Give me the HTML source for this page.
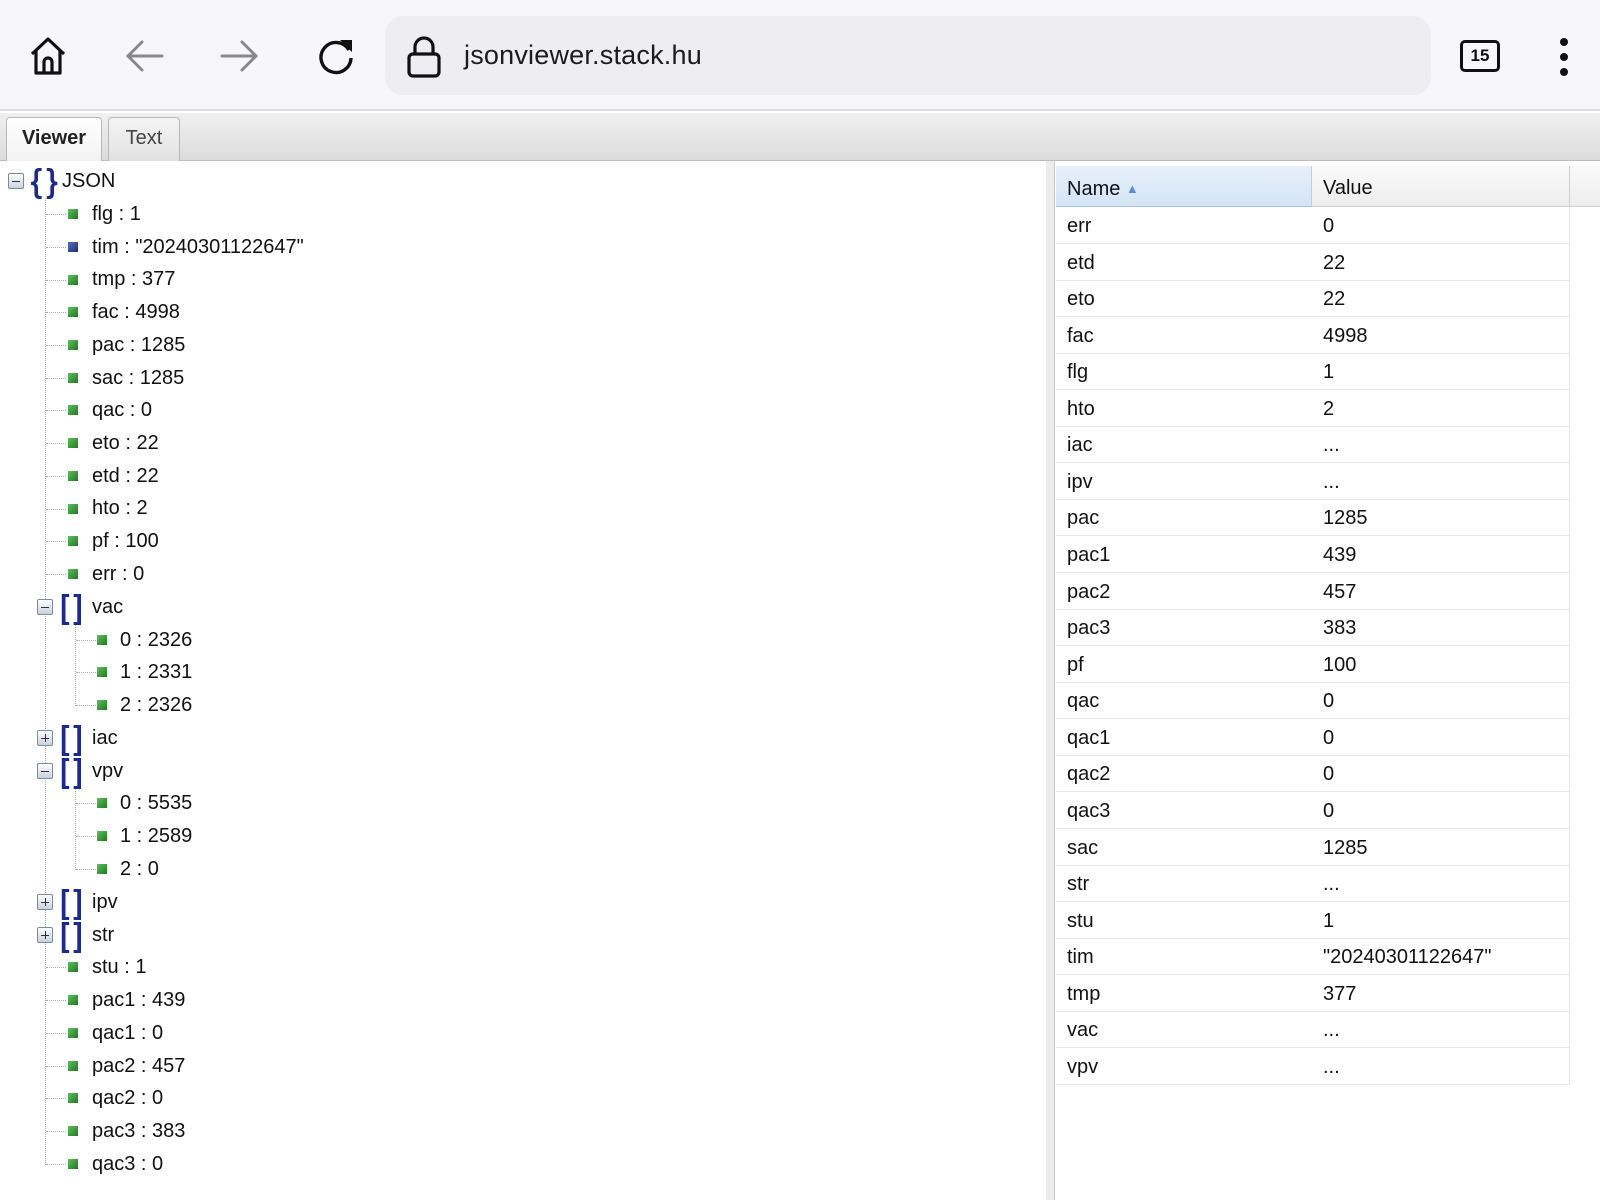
<!DOCTYPE html>
<html><head><meta charset="utf-8">
<style>
*{margin:0;padding:0;box-sizing:border-box}
body{width:1600px;height:1200px;overflow:hidden;background:#fff;font-family:"Liberation Sans",Arial,sans-serif;color:#111;position:relative}
.abs{position:absolute}
#top{left:0;top:0;width:1600px;height:111px;background:#f7f7fa;border-bottom:2px solid #dcdcdc}
#url{left:385px;top:16px;width:1046px;height:79px;border-radius:18px;background:#ededf2}
#urltxt{left:464px;top:40px;font-size:27px;color:#1b1b1f;letter-spacing:0.2px}
#tabs{left:0;top:113px;width:1600px;height:48px;background:linear-gradient(#f0f0f0,#dcdcdc);border-bottom:1px solid #bdbdbd}
.tab{top:4px;height:44px;border:1px solid #b8b8b8;border-bottom:none;border-radius:4px 4px 0 0;font-size:20px;text-align:center;line-height:40px}
#t1{left:6px;width:96px;background:linear-gradient(#fff,#f2f2f2);font-weight:bold;color:#222}
#t2{left:108px;width:72px;background:linear-gradient(#f4f4f4,#e2e2e2);color:#444}
.r{position:absolute;height:32px;line-height:32px;font-size:20px;white-space:nowrap}
.sq{position:absolute;width:10px;height:10px;background:linear-gradient(135deg,#5fbf5f,#1e7a1e)}
.sqb{background:linear-gradient(135deg,#5a6fc0,#1a2a7a)}
.tg{position:absolute;width:16px;height:16px;border:1px solid #7a8aa0;border-radius:2px;background:linear-gradient(#fff,#c8d2de)}
.tg:before{content:"";position:absolute;left:3px;top:6.5px;width:8px;height:1.5px;background:#333}
.tg.p:after{content:"";position:absolute;left:6.5px;top:3px;width:1.5px;height:8px;background:#333}
.br{position:absolute;font-size:32px;color:#1d2a8a;line-height:32px;letter-spacing:5px;-webkit-text-stroke:1px #1d2a8a}
.vl{position:absolute;border-left:1px dotted #aaa;width:0}
.hl{position:absolute;border-top:1px dotted #aaa;height:0}
#div{left:1046px;top:161px;width:9px;height:1039px;background:#ececec;border-right:1px solid #c8c8c8}
.hd{position:absolute;top:168px;height:41px;line-height:41px;font-size:20px}
.tr{position:absolute;left:1056px;width:513px;height:36.55px;line-height:38px;font-size:20px;border-bottom:1px solid #e8e8e8}
.tr span{position:absolute}
#tree{position:absolute;left:0;top:2px;width:1040px;height:1190px}
</style></head><body>
<div id="top" class="abs"></div>
<svg class="abs" style="left:28px;top:36px" width="40" height="40" viewBox="0 0 40 40" fill="none" stroke="#111" stroke-width="3.2" stroke-linejoin="round"><path d="M4 18 L20 3 L36 18 M8 15 V37 H32 V15 M16 37 V26 a4 4 0 0 1 8 0 V37"/></svg>
<svg class="abs" style="left:124px;top:38px" width="40" height="36" viewBox="0 0 40 36" fill="none" stroke="#888" stroke-width="3" stroke-linecap="round"><path d="M38 18 H4 M18 4 L4 18 L18 32"/></svg>
<svg class="abs" style="left:220px;top:38px" width="40" height="36" viewBox="0 0 40 36" fill="none" stroke="#888" stroke-width="3" stroke-linecap="round"><path d="M2 18 H36 M22 4 L36 18 L22 32"/></svg>
<svg class="abs" style="left:316px;top:36px" width="40" height="40" viewBox="0 0 40 40" fill="none" stroke="#111" stroke-width="3.4"><path d="M33 14 A15 15 0 1 0 35 22"/><path d="M24 4 L36 4 L36 16 Z" fill="#111" stroke="none"/></svg>
<div id="url" class="abs"></div>
<svg class="abs" style="left:407px;top:36px" width="34" height="42" viewBox="0 0 34 42" fill="none" stroke="#111" stroke-width="3.2"><path d="M8 18 V11 a9 9 0 0 1 18 0 V18"/><rect x="2" y="18" width="30" height="22" rx="4"/></svg>
<div id="urltxt" class="abs">jsonviewer.stack.hu</div>
<div class="abs" style="left:1460px;top:40px;width:40px;height:32px;border:3px solid #111;border-radius:5px;font-size:17px;font-weight:bold;text-align:center;line-height:26px">15</div>
<div class="abs" style="left:1560px;top:38px;width:8px;height:8px;border-radius:50%;background:#111"></div>
<div class="abs" style="left:1560px;top:53px;width:8px;height:8px;border-radius:50%;background:#111"></div>
<div class="abs" style="left:1560px;top:68px;width:8px;height:8px;border-radius:50%;background:#111"></div>
<div id="tabs" class="abs"><div class="tab abs" id="t1">Viewer</div><div class="tab abs" id="t2">Text</div></div>

<div id="tree">
<div class="vl" style="left:45px;top:196px;height:967px"></div>
<div class="vl" style="left:75px;top:622px;height:82px"></div>
<div class="vl" style="left:75px;top:786px;height:82px"></div>

<div class="tg" style="left:8px;top:171px"></div>
<div class="br" style="left:31px;top:163px">{}</div>
<div class="r" style="left:62px;top:163px">JSON</div>

<div class="hl" style="left:46px;top:212px;width:20px"></div><div class="sq" style="left:68px;top:207px"></div><div class="r" style="left:92px;top:196px">flg : 1</div>
<div class="hl" style="left:46px;top:245px;width:20px"></div><div class="sq sqb" style="left:68px;top:240px"></div><div class="r" style="left:92px;top:229px">tim : "20240301122647"</div>
<div class="hl" style="left:46px;top:278px;width:20px"></div><div class="sq" style="left:68px;top:273px"></div><div class="r" style="left:92px;top:261px">tmp : 377</div>
<div class="hl" style="left:46px;top:310px;width:20px"></div><div class="sq" style="left:68px;top:305px"></div><div class="r" style="left:92px;top:294px">fac : 4998</div>
<div class="hl" style="left:46px;top:343px;width:20px"></div><div class="sq" style="left:68px;top:338px"></div><div class="r" style="left:92px;top:327px">pac : 1285</div>
<div class="hl" style="left:46px;top:376px;width:20px"></div><div class="sq" style="left:68px;top:371px"></div><div class="r" style="left:92px;top:360px">sac : 1285</div>
<div class="hl" style="left:46px;top:408px;width:20px"></div><div class="sq" style="left:68px;top:403px"></div><div class="r" style="left:92px;top:392px">qac : 0</div>
<div class="hl" style="left:46px;top:441px;width:20px"></div><div class="sq" style="left:68px;top:436px"></div><div class="r" style="left:92px;top:425px">eto : 22</div>
<div class="hl" style="left:46px;top:474px;width:20px"></div><div class="sq" style="left:68px;top:469px"></div><div class="r" style="left:92px;top:458px">etd : 22</div>
<div class="hl" style="left:46px;top:507px;width:20px"></div><div class="sq" style="left:68px;top:502px"></div><div class="r" style="left:92px;top:490px">hto : 2</div>
<div class="hl" style="left:46px;top:539px;width:20px"></div><div class="sq" style="left:68px;top:534px"></div><div class="r" style="left:92px;top:523px">pf : 100</div>
<div class="hl" style="left:46px;top:572px;width:20px"></div><div class="sq" style="left:68px;top:567px"></div><div class="r" style="left:92px;top:556px">err : 0</div>

<div class="tg" style="left:37px;top:597px"></div><div class="br" style="left:60px;top:589px">[]</div><div class="r" style="left:92px;top:589px">vac</div>
<div class="hl" style="left:76px;top:638px;width:20px"></div><div class="sq" style="left:97px;top:633px"></div><div class="r" style="left:120px;top:622px">0 : 2326</div>
<div class="hl" style="left:76px;top:670px;width:20px"></div><div class="sq" style="left:97px;top:665px"></div><div class="r" style="left:120px;top:654px">1 : 2331</div>
<div class="hl" style="left:76px;top:703px;width:20px"></div><div class="sq" style="left:97px;top:698px"></div><div class="r" style="left:120px;top:687px">2 : 2326</div>
<div class="tg p" style="left:37px;top:728px"></div><div class="br" style="left:60px;top:720px">[]</div><div class="r" style="left:92px;top:720px">iac</div>
<div class="tg" style="left:37px;top:761px"></div><div class="br" style="left:60px;top:753px">[]</div><div class="r" style="left:92px;top:753px">vpv</div>
<div class="hl" style="left:76px;top:801px;width:20px"></div><div class="sq" style="left:97px;top:796px"></div><div class="r" style="left:120px;top:785px">0 : 5535</div>
<div class="hl" style="left:76px;top:834px;width:20px"></div><div class="sq" style="left:97px;top:829px"></div><div class="r" style="left:120px;top:818px">1 : 2589</div>
<div class="hl" style="left:76px;top:867px;width:20px"></div><div class="sq" style="left:97px;top:862px"></div><div class="r" style="left:120px;top:851px">2 : 0</div>
<div class="tg p" style="left:37px;top:892px"></div><div class="br" style="left:60px;top:884px">[]</div><div class="r" style="left:92px;top:884px">ipv</div>
<div class="tg p" style="left:37px;top:925px"></div><div class="br" style="left:60px;top:917px">[]</div><div class="r" style="left:92px;top:917px">str</div>
<div class="hl" style="left:46px;top:965px;width:20px"></div><div class="sq" style="left:68px;top:960px"></div><div class="r" style="left:92px;top:949px">stu : 1</div>
<div class="hl" style="left:46px;top:998px;width:20px"></div><div class="sq" style="left:68px;top:993px"></div><div class="r" style="left:92px;top:982px">pac1 : 439</div>
<div class="hl" style="left:46px;top:1031px;width:20px"></div><div class="sq" style="left:68px;top:1026px"></div><div class="r" style="left:92px;top:1015px">qac1 : 0</div>
<div class="hl" style="left:46px;top:1064px;width:20px"></div><div class="sq" style="left:68px;top:1059px"></div><div class="r" style="left:92px;top:1048px">pac2 : 457</div>
<div class="hl" style="left:46px;top:1096px;width:20px"></div><div class="sq" style="left:68px;top:1091px"></div><div class="r" style="left:92px;top:1080px">qac2 : 0</div>
<div class="hl" style="left:46px;top:1129px;width:20px"></div><div class="sq" style="left:68px;top:1124px"></div><div class="r" style="left:92px;top:1113px">pac3 : 383</div>
<div class="hl" style="left:46px;top:1162px;width:20px"></div><div class="sq" style="left:68px;top:1157px"></div><div class="r" style="left:92px;top:1146px">qac3 : 0</div>
</div>

<div id="div" class="abs"></div>
<div class="abs" style="left:1056px;top:166px;width:544px;height:41px;background:linear-gradient(#fafafa,#ededed);border-bottom:1px solid #d0d0d0"></div>
<div class="abs" style="left:1056px;top:166px;width:256px;height:41px;background:linear-gradient(#e6f0fb,#d4e4f6);border-right:1px solid #c0cfe0;border-bottom:1px solid #a8c4e4"></div>
<div class="abs" style="left:1569px;top:166px;width:1px;height:41px;background:#d0d0d0"></div>
<div class="hd" style="left:1067px">Name <span style="font-size:13px;color:#5b8fd0;vertical-align:2px">&#9650;</span></div>
<div class="hd" style="left:1323px">Value</div>
<div class="abs" style="left:1569px;top:207px;width:1px;height:878px;background:#e6e6e6"></div>

<div class="tr" style="top:207px"><span style="left:11px">err</span><span style="left:267px">0</span></div>
<div class="tr" style="top:244px"><span style="left:11px">etd</span><span style="left:267px">22</span></div>
<div class="tr" style="top:280px"><span style="left:11px">eto</span><span style="left:267px">22</span></div>
<div class="tr" style="top:317px"><span style="left:11px">fac</span><span style="left:267px">4998</span></div>
<div class="tr" style="top:353px"><span style="left:11px">flg</span><span style="left:267px">1</span></div>
<div class="tr" style="top:390px"><span style="left:11px">hto</span><span style="left:267px">2</span></div>
<div class="tr" style="top:426px"><span style="left:11px">iac</span><span style="left:267px">...</span></div>
<div class="tr" style="top:463px"><span style="left:11px">ipv</span><span style="left:267px">...</span></div>
<div class="tr" style="top:499px"><span style="left:11px">pac</span><span style="left:267px">1285</span></div>
<div class="tr" style="top:536px"><span style="left:11px">pac1</span><span style="left:267px">439</span></div>
<div class="tr" style="top:573px"><span style="left:11px">pac2</span><span style="left:267px">457</span></div>
<div class="tr" style="top:609px"><span style="left:11px">pac3</span><span style="left:267px">383</span></div>
<div class="tr" style="top:646px"><span style="left:11px">pf</span><span style="left:267px">100</span></div>
<div class="tr" style="top:682px"><span style="left:11px">qac</span><span style="left:267px">0</span></div>
<div class="tr" style="top:719px"><span style="left:11px">qac1</span><span style="left:267px">0</span></div>
<div class="tr" style="top:755px"><span style="left:11px">qac2</span><span style="left:267px">0</span></div>
<div class="tr" style="top:792px"><span style="left:11px">qac3</span><span style="left:267px">0</span></div>
<div class="tr" style="top:829px"><span style="left:11px">sac</span><span style="left:267px">1285</span></div>
<div class="tr" style="top:865px"><span style="left:11px">str</span><span style="left:267px">...</span></div>
<div class="tr" style="top:902px"><span style="left:11px">stu</span><span style="left:267px">1</span></div>
<div class="tr" style="top:938px"><span style="left:11px">tim</span><span style="left:267px">"20240301122647"</span></div>
<div class="tr" style="top:975px"><span style="left:11px">tmp</span><span style="left:267px">377</span></div>
<div class="tr" style="top:1011px"><span style="left:11px">vac</span><span style="left:267px">...</span></div>
<div class="tr" style="top:1048px"><span style="left:11px">vpv</span><span style="left:267px">...</span></div>
</body></html>
